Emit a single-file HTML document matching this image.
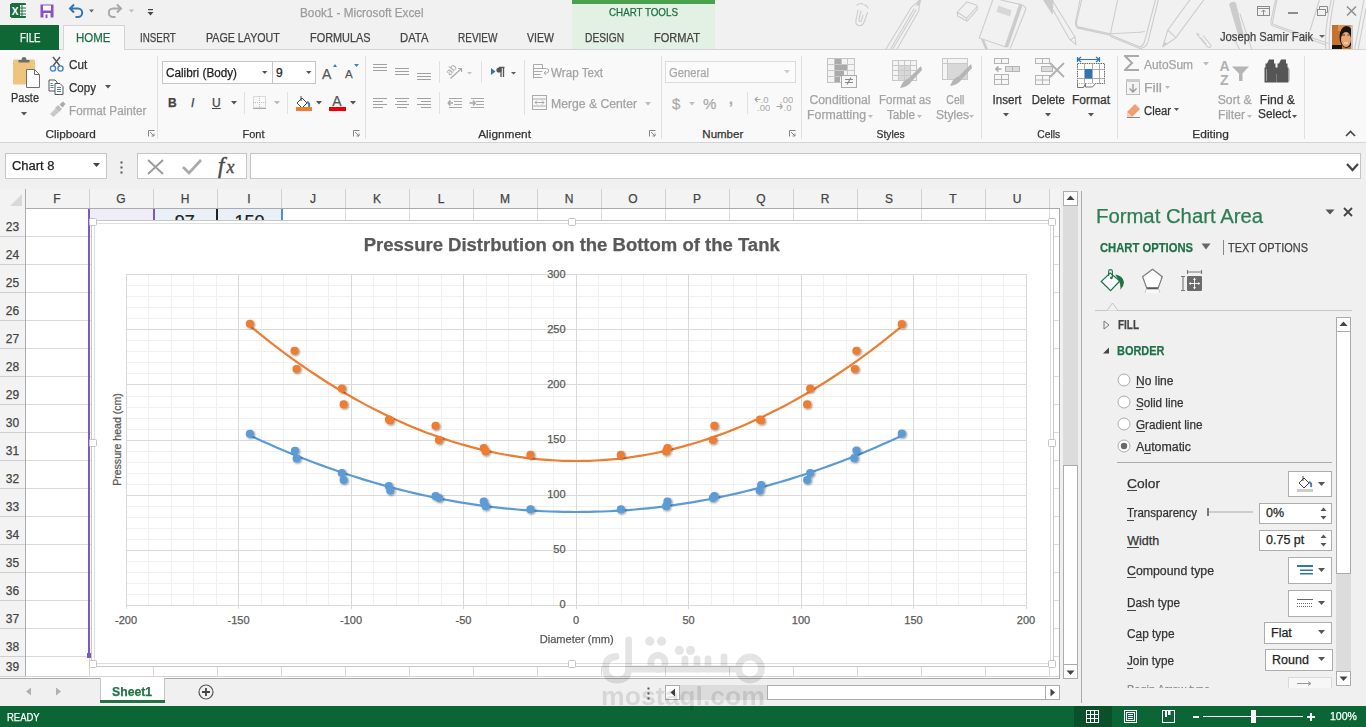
<!DOCTYPE html>
<html><head><meta charset="utf-8"><style>
html,body{margin:0;padding:0;width:1366px;height:727px;overflow:hidden;background:#f0f0f0}
body{position:relative;font-family:"Liberation Sans",sans-serif}
body>div{position:absolute;white-space:nowrap;-webkit-text-stroke:0.25px currentColor}
</style></head><body>
<div style="left:0px;top:0px;width:1366px;height:50px;background:#f1f1f1"></div>
<div style="left:0px;top:50px;width:1366px;height:93px;background:#f9f9f9"></div>
<div style="left:0px;top:142px;width:1366px;height:1px;background:#d4d4d4"></div>
<div style="left:0px;top:143px;width:1366px;height:563px;background:#f0f0f0"></div>
<div style="left:0px;top:49px;width:1366px;height:1px;background:#d4d4d4"></div>
<svg style="position:absolute;left:10px;top:2px;" width="17" height="17" viewBox="0 0 17 17"><rect x="1" y="1" width="15" height="15" rx="1" fill="#1d6f42"/><rect x="8" y="3" width="8" height="11" fill="#fff"/><g stroke="#1d6f42" stroke-width="1"><line x1="8" y1="6" x2="16" y2="6"/><line x1="8" y1="9" x2="16" y2="9"/><line x1="8" y1="12" x2="16" y2="12"/><line x1="12" y1="3" x2="12" y2="14"/></g><rect x="0" y="2" width="10" height="13" fill="#1d6f42"/><text x="5" y="12.5" font-size="10" font-weight="bold" fill="#fff" text-anchor="middle" font-family="Liberation Sans">X</text></svg>
<svg style="position:absolute;left:40px;top:4px;" width="15" height="15" viewBox="0 0 15 15"><rect x="0.5" y="0.5" width="13" height="13" fill="#8a4fc2" /><rect x="3" y="1.5" width="8" height="5" fill="#fff"/><rect x="3.5" y="9" width="7" height="5" fill="#fff"/><rect x="5.5" y="10.5" width="2" height="3.5" fill="#8a4fc2"/></svg>
<svg style="position:absolute;left:68px;top:2px;" width="28" height="17" viewBox="0 0 28 17"><path d="M6 2.5 L2 6.5 L6 10.5 M2 6.5 H10 a4.2 4.2 0 0 1 0 8.4 H7.5" fill="none" stroke="#2f75b5" stroke-width="2"/><path d="M21 7.5 h5 l-2.5 3z" fill="#666"/></svg>
<svg style="position:absolute;left:108px;top:2px;" width="28" height="17" viewBox="0 0 28 17"><path d="M9 2.5 L13 6.5 L9 10.5 M13 6.5 H5 a4.2 4.2 0 0 0 0 8.4 H7.5" fill="none" stroke="#a8a8a8" stroke-width="2"/><path d="M21 7.5 h5 l-2.5 3z" fill="#bbb"/></svg>
<svg style="position:absolute;left:146px;top:8px;" width="10" height="10" viewBox="0 0 10 10"><rect x="2" y="1" width="5" height="1.2" fill="#444"/><path d="M1.5 4 h6 l-3 3.5z" fill="#444"/></svg>
<div style="left:300.00px;top:6.84px;font-size:12px;line-height:12px;color:#9c9c9c;transform:scaleX(0.9799);transform-origin:left center;">Book1 - Microsoft Excel</div>
<div style="left:572px;top:0px;width:143px;height:49px;background:#e3f1e4"></div>
<div style="left:572px;top:0px;width:143px;height:4px;background:#4aa14f"></div>
<div style="left:602.52px;top:7.27px;font-size:11.5px;line-height:11.5px;color:#1a6e3f;transform:scaleX(0.8524);transform-origin:center center;">CHART TOOLS</div>
<svg style="position:absolute;left:0;top:0" width="1366" height="49">
<g fill="none" stroke="#cdcdcd" stroke-width="1.1" stroke-linecap="round" stroke-linejoin="round">
<path d="M858 10 L856 20 Q855 25 859 25.5 Q863 26 864.5 21 L867.5 12.5 M861 11 L859 19 Q858.5 22 861 21.5 L863 15"/>
<path d="M857 5 Q860 2.5 863 4 M864 5 Q867 5 868 8"/>
<path d="M886 49 L911.4 7.3 M890.5 49 L914 9 M892.7 49 L916.1 10 M897.1 49 L918.7 11 M911.4 7.3 L920 0 M918.7 11 L920 0"/>
<path d="M967 1.8 L977 5.5 L977.3 9.5 L967.1 21.2 L957.6 16.1 L957.2 12.1 Z M957.5 12.3 L966.5 18.3 L977.2 6.5 M966.5 18.3 V21"/>
<path d="M992.7 0 L979.2 38.1 L1005.9 46.9 M1010.3 48.3 L1025.7 9.5 Q1026 6 1020.5 4.4 L1000.8 0"/>
<path d="M1049.5 3.7 L1069.3 38.8 L1075.9 44.7 L1075.1 37.3 L1053.5 2.2 M1070.4 39.9 L1074.4 37.3"/>
<path d="M1081.7 0 L1076.6 22 Q1076 27 1079.5 27.1 L1110.3 33.7 L1140 32.2 M1080 0 L1075.5 22 Q1075 28.5 1080 28.6 L1110.3 35.1 M1117.6 0 L1110.3 34.4 M1110.6 35.1 L1140 46.9 M1110.6 36.5 L1140 48.5"/>
<path d="M1155.4 0 L1145 40 Q1143.5 46 1140 46.9 M1158.3 0 L1148 41.7 Q1146 47 1141 48.5 M1140 32.2 L1144.4 31.5"/>
<path d="M1189.8 0 L1167.8 30 L1162.7 46.9 L1175.9 37.7 L1203.7 0 M1167.8 30 L1175.9 37.7"/>
<path d="M1199 35 Q1195.5 32 1198 35.5 L1207 46.5 Q1210.5 49 1211 45.5 L1203.5 36 M1201 38 L1206 44"/>
<path d="M1240 13.8 L1252 50 M1232 35 L1240 50"/>
<path d="M1276.9 0 L1272.7 21.2 Q1272 25 1275 24.9 L1328.6 43.4 M1275.5 0 L1271 21 Q1270.5 27 1276 27 L1326 45"/>
<path d="M1319.3 0 L1310.1 30.4 M1331.3 0 Q1324 30 1325.8 50 M1334 0 Q1328 30 1329.5 50 M1364 0 L1354.4 50 M1366 8 L1358 50"/>
</g>
<g fill="#cccccc">
<path d="M918.5 0 L921 0 L920 5 L916 6z"/>
<path d="M998.2 5.5 L1011.4 10.2 L1010.3 16.5 L996.7 12.1z" opacity="0.7"/>
<path d="M1019 4.5 L1022.5 5.5 L1008 47.5 L1004.5 46.5z"/>
<path d="M981 39 L984 39.5 L988 49 L985 49z"/>
<path d="M1042.9 0 L1053.5 0 L1052.8 14.6 L1051.7 13.5z"/>
<path d="M1164 42 L1162.7 46.9 L1168 43.5z"/>
<path d="M1229 4 Q1233 0 1236 3 L1244 36 L1239 38z"/>
</g>
</svg>
<svg style="position:absolute;left:1256px;top:5px;" width="16" height="12" viewBox="0 0 16 12"><rect x="1.5" y="1.5" width="12" height="9" fill="none" stroke="#8c8c8c"/><line x1="1.5" y1="3.5" x2="13.5" y2="3.5" stroke="#8c8c8c"/><path d="M7.5 10 v-5 M5.5 7 l2 -2 l2 2" stroke="#8c8c8c" fill="none"/></svg>
<div style="left:1288px;top:12px;width:10px;height:1.6px;background:#8c8c8c"></div>
<svg style="position:absolute;left:1316px;top:5px;" width="14" height="12" viewBox="0 0 14 12"><rect x="1.5" y="4.5" width="8" height="6" fill="none" stroke="#8c8c8c"/><path d="M3.5 4.5 v-3 h8 v6 h-2" fill="none" stroke="#8c8c8c"/></svg>
<svg style="position:absolute;left:1345px;top:5px;" width="14" height="12" viewBox="0 0 14 12"><path d="M2 1.5 L11 10.5 M11 1.5 L2 10.5" stroke="#8c8c8c" stroke-width="1.5"/></svg>
<div style="left:1220.00px;top:30.84px;font-size:12px;line-height:12px;color:#444;transform:scaleX(0.9360);transform-origin:left center;">Joseph Samir Faik</div>
<svg style="position:absolute;left:1319px;top:35px;" width="8" height="5" viewBox="0 0 8 5"><path d="M0 0 h6 l-3 3z" fill="#666"/></svg>
<svg style="position:absolute;left:1332px;top:25px;" width="21" height="24" viewBox="0 0 21 24"><rect width="21" height="24" fill="#c6722f"/><rect x="6" y="0" width="15" height="6" fill="#e09050"/><ellipse cx="14.5" cy="12" rx="7" ry="11" fill="#1a1414"/><ellipse cx="14" cy="14.5" rx="5" ry="7.5" fill="#e6a571"/><path d="M10 10 h3 M15.5 10 h3" stroke="#553322" stroke-width="1"/><path d="M12 18 h4" stroke="#f0e0d0" stroke-width="1.2"/><rect x="0" y="20" width="10" height="4" fill="#151515"/><rect x="19" y="0" width="2" height="24" fill="#c8c8c8"/></svg>
<div style="left:0px;top:25px;width:59px;height:25px;background:#0e6735"></div>
<div style="left:19.50px;top:31.84px;font-size:12px;line-height:12px;color:#fff;transform:scaleX(0.8090);transform-origin:left center;">FILE</div>
<div style="left:63px;top:25px;width:62px;height:25px;background:#f9f9f9;border:1px solid #d4d4d4;border-bottom:none;box-sizing:border-box"></div>
<div style="left:64px;top:49px;width:60px;height:1px;background:#f9f9f9"></div>
<div style="left:76.40px;top:31.84px;font-size:12px;line-height:12px;color:#1e7145;transform:scaleX(0.9556);transform-origin:left center;">HOME</div>
<div style="left:140.30px;top:31.84px;font-size:12px;line-height:12px;color:#444;transform:scaleX(0.8176);transform-origin:left center;">INSERT</div>
<div style="left:206.40px;top:31.84px;font-size:12px;line-height:12px;color:#444;transform:scaleX(0.8901);transform-origin:left center;">PAGE LAYOUT</div>
<div style="left:310.40px;top:31.84px;font-size:12px;line-height:12px;color:#444;transform:scaleX(0.9089);transform-origin:left center;">FORMULAS</div>
<div style="left:400.00px;top:31.84px;font-size:12px;line-height:12px;color:#444;transform:scaleX(0.9397);transform-origin:left center;">DATA</div>
<div style="left:458.00px;top:31.84px;font-size:12px;line-height:12px;color:#444;transform:scaleX(0.8344);transform-origin:left center;">REVIEW</div>
<div style="left:526.80px;top:31.84px;font-size:12px;line-height:12px;color:#444;transform:scaleX(0.8771);transform-origin:left center;">VIEW</div>
<div style="left:585.40px;top:31.84px;font-size:12px;line-height:12px;color:#444;transform:scaleX(0.8520);transform-origin:left center;">DESIGN</div>
<div style="left:654.20px;top:31.84px;font-size:12px;line-height:12px;color:#444;transform:scaleX(0.9223);transform-origin:left center;">FORMAT</div>
<div style="left:157px;top:56px;width:1px;height:83px;background:#e1e1e1"></div>
<div style="left:365px;top:56px;width:1px;height:83px;background:#e1e1e1"></div>
<div style="left:661px;top:56px;width:1px;height:83px;background:#e1e1e1"></div>
<div style="left:801px;top:56px;width:1px;height:83px;background:#e1e1e1"></div>
<div style="left:981px;top:56px;width:1px;height:83px;background:#e1e1e1"></div>
<div style="left:1117px;top:56px;width:1px;height:83px;background:#e1e1e1"></div>
<div style="left:1304px;top:56px;width:1px;height:83px;background:#e1e1e1"></div>
<div style="left:45.99px;top:128.77px;font-size:11.5px;line-height:11.5px;color:#333;transform:scaleX(1.0240);transform-origin:center center;">Clipboard</div>
<div style="left:241.50px;top:128.77px;font-size:11.5px;line-height:11.5px;color:#333;transform:scaleX(0.9561);transform-origin:center center;">Font</div>
<div style="left:478.93px;top:128.77px;font-size:11.5px;line-height:11.5px;color:#333;transform:scaleX(1.0306);transform-origin:center center;">Alignment</div>
<div style="left:702.35px;top:128.77px;font-size:11.5px;line-height:11.5px;color:#333;">Number</div>
<div style="left:875.04px;top:128.77px;font-size:11.5px;line-height:11.5px;color:#333;transform:scaleX(0.8973);transform-origin:center center;">Styles</div>
<div style="left:1035.72px;top:128.77px;font-size:11.5px;line-height:11.5px;color:#333;transform:scaleX(0.8998);transform-origin:center center;">Cells</div>
<div style="left:1193.22px;top:128.77px;font-size:11.5px;line-height:11.5px;color:#333;transform:scaleX(1.0381);transform-origin:center center;">Editing</div>
<svg style="position:absolute;left:148px;top:130px;" width="7" height="7" viewBox="0 0 7 7"><path d="M0.5 0.5 h6 M0.5 0.5 v6" stroke="#888" fill="none"/><path d="M2 2 L6 6 M6 3.5 v2.5 h-2.5" stroke="#888" fill="none"/></svg>
<svg style="position:absolute;left:353px;top:130px;" width="7" height="7" viewBox="0 0 7 7"><path d="M0.5 0.5 h6 M0.5 0.5 v6" stroke="#888" fill="none"/><path d="M2 2 L6 6 M6 3.5 v2.5 h-2.5" stroke="#888" fill="none"/></svg>
<svg style="position:absolute;left:649px;top:130px;" width="7" height="7" viewBox="0 0 7 7"><path d="M0.5 0.5 h6 M0.5 0.5 v6" stroke="#888" fill="none"/><path d="M2 2 L6 6 M6 3.5 v2.5 h-2.5" stroke="#888" fill="none"/></svg>
<svg style="position:absolute;left:789px;top:130px;" width="7" height="7" viewBox="0 0 7 7"><path d="M0.5 0.5 h6 M0.5 0.5 v6" stroke="#888" fill="none"/><path d="M2 2 L6 6 M6 3.5 v2.5 h-2.5" stroke="#888" fill="none"/></svg>
<svg style="position:absolute;left:1345px;top:130px;" width="11" height="7" viewBox="0 0 11 7"><path d="M1 6 L5.5 1.5 L10 6" stroke="#444" stroke-width="1.6" fill="none"/></svg>
<svg style="position:absolute;left:12px;top:56px;" width="30" height="33" viewBox="0 0 30 33"><rect x="1" y="3.5" width="22" height="25" rx="1.5" fill="#efc47e"/><path d="M6.5 6.5 v-2.5 h3 q0 -3 2.5 -3 q2.5 0 2.5 3 h3 v2.5z" fill="#6e6e6e"/><path d="M14.5 13.5 h8 l5 5 v13 h-13z" fill="#fff" stroke="#6e6e6e" stroke-width="1"/><path d="M22.5 13.5 v5 h5" fill="none" stroke="#6e6e6e"/></svg>
<div style="left:11.30px;top:92.14px;font-size:12px;line-height:12px;color:#333;transform:scaleX(0.9125);transform-origin:left center;">Paste</div>
<svg style="position:absolute;left:21px;top:112px;" width="7" height="5" viewBox="0 0 7 5"><path d="M0 0 h6 l-3 3.5z" fill="#555"/></svg>
<svg style="position:absolute;left:49px;top:56px;" width="16" height="16" viewBox="0 0 16 16"><path d="M4 1 L11 10 M11 1 L4 10" stroke="#555" stroke-width="1.4"/><circle cx="4" cy="12.5" r="2.6" fill="none" stroke="#3f7fc4" stroke-width="1.3"/><circle cx="11.5" cy="12.5" r="2.6" fill="none" stroke="#3f7fc4" stroke-width="1.3"/></svg>
<div style="left:68.50px;top:58.54px;font-size:12px;line-height:12px;color:#333;transform:scaleX(0.9747);transform-origin:left center;">Cut</div>
<svg style="position:absolute;left:48px;top:79px;" width="17" height="16" viewBox="0 0 17 16"><path d="M1 1 h6 l2 2 v9 h-8z" fill="#fff" stroke="#555"/><path d="M7 4.5 h5 l3 3 v8 h-8z" fill="#fff" stroke="#555"/><path d="M2.5 4.5 h2 M2.5 6.5 h3 M2.5 8.5 h3 M9 8.5 h4 M9 10.5 h4 M9 12.5 h4" stroke="#3f7fc4"/></svg>
<div style="left:68.50px;top:82.34px;font-size:12px;line-height:12px;color:#333;transform:scaleX(0.9639);transform-origin:left center;">Copy</div>
<svg style="position:absolute;left:105px;top:85px;" width="7" height="5" viewBox="0 0 7 5"><path d="M0 0 h6 l-3 3.5z" fill="#555"/></svg>
<svg style="position:absolute;left:49px;top:101px;" width="17" height="16" viewBox="0 0 17 16"><path d="M1 13 L6.5 7.5 L10 11 L4.5 16z" fill="#c9c9c9"/><path d="M6 7 l3 -3 l4 4 l-3 3z" fill="#bdbdbd"/><path d="M10.5 3.5 l3.5 -3 l2.5 2.5 l-3 3.5z" fill="#aaaaaa"/></svg>
<div style="left:68.50px;top:105.34px;font-size:12px;line-height:12px;color:#a3a3a3;transform:scaleX(0.9766);transform-origin:left center;">Format Painter</div>
<div style="left:162px;top:61px;width:111px;height:23px;background:#fff;border:1px solid #c6c6c6;box-sizing:border-box"></div>
<div style="left:272px;top:61px;width:44px;height:23px;background:#fff;border:1px solid #c6c6c6;box-sizing:border-box"></div>
<div style="left:165.50px;top:67.34px;font-size:12px;line-height:12px;color:#222;transform:scaleX(0.9769);transform-origin:left center;">Calibri (Body)</div>
<svg style="position:absolute;left:262px;top:71px;" width="6" height="4" viewBox="0 0 6 4"><path d="M0 0 h5.5 l-2.75 3z" fill="#555"/></svg>
<div style="left:276.00px;top:67.34px;font-size:12px;line-height:12px;color:#222;">9</div>
<svg style="position:absolute;left:306px;top:71px;" width="6" height="4" viewBox="0 0 6 4"><path d="M0 0 h5.5 l-2.75 3z" fill="#555"/></svg>
<div style="left:322.00px;top:67.15px;font-size:14px;line-height:14px;color:#555;">A</div>
<svg style="position:absolute;left:333px;top:64px;" width="5" height="4" viewBox="0 0 5 4"><path d="M0 3 h4 l-2 -3z" fill="#3f7fc4"/></svg>
<div style="left:345.00px;top:69.27px;font-size:11.5px;line-height:11.5px;color:#555;">A</div>
<svg style="position:absolute;left:354px;top:64px;" width="6" height="4" viewBox="0 0 6 4"><path d="M0 0 h5 l-2.5 3z" fill="#3f7fc4"/></svg>
<div style="left:168.00px;top:96.84px;font-size:12px;line-height:12px;color:#444;font-weight:bold;">B</div>
<div style="left:191.00px;top:96.84px;font-size:12px;line-height:12px;color:#444;font-style:italic;">I</div>
<div style="left:212.00px;top:96.84px;font-size:12px;line-height:12px;color:#444;text-decoration:underline;">U</div>
<svg style="position:absolute;left:231px;top:101px;" width="7" height="5" viewBox="0 0 7 5"><path d="M0 0 h6 l-3 3.5z" fill="#555"/></svg>
<div style="left:244px;top:92px;width:1px;height:22px;background:#e1e1e1"></div>
<svg style="position:absolute;left:253px;top:96px;" width="14" height="13" viewBox="0 0 14 13"><g stroke="#bbb" stroke-dasharray="1 1"><rect x="0.5" y="0.5" width="12" height="11" fill="none"/><line x1="6.5" y1="0" x2="6.5" y2="12"/><line x1="0" y1="6.5" x2="13" y2="6.5"/></g><line x1="0" y1="12.5" x2="13" y2="12.5" stroke="#aaa"/></svg>
<svg style="position:absolute;left:274px;top:101px;" width="7" height="5" viewBox="0 0 7 5"><path d="M0 0 h6 l-3 3.5z" fill="#bbb"/></svg>
<div style="left:287px;top:92px;width:1px;height:22px;background:#e1e1e1"></div>
<svg style="position:absolute;left:295px;top:95px;" width="17" height="17" viewBox="0 0 17 17"><path d="M2 8 L7 3 L12 8 L7 13z" fill="#fff" stroke="#444"/><path d="M6 1 v5" stroke="#444"/><path d="M12 7 q3 1 2 5" stroke="#3f7fc4" stroke-width="2" fill="none"/><rect x="1" y="12" width="16" height="4" fill="#ed7d31"/></svg>
<svg style="position:absolute;left:316px;top:101px;" width="7" height="5" viewBox="0 0 7 5"><path d="M0 0 h6 l-3 3.5z" fill="#555"/></svg>
<div style="left:332.33px;top:94.15px;font-size:14px;line-height:14px;color:#555;">A</div>
<div style="left:329px;top:107px;width:17px;height:4px;background:#e00"></div>
<svg style="position:absolute;left:350px;top:101px;" width="7" height="5" viewBox="0 0 7 5"><path d="M0 0 h6 l-3 3.5z" fill="#555"/></svg>
<svg style="position:absolute;left:373px;top:64px;" width="16" height="14" viewBox="0 0 16 14"><rect x="0" y="0" width="14" height="1" fill="#a0a0a0"/><rect x="0" y="3" width="14" height="1" fill="#a0a0a0"/><rect x="0" y="6" width="14" height="1" fill="#a0a0a0"/></svg>
<svg style="position:absolute;left:395px;top:68px;" width="16" height="14" viewBox="0 0 16 14"><rect x="0" y="0" width="14" height="1" fill="#a0a0a0"/><rect x="0" y="3" width="14" height="1" fill="#a0a0a0"/><rect x="0" y="6" width="14" height="1" fill="#a0a0a0"/></svg>
<svg style="position:absolute;left:417px;top:73px;" width="16" height="14" viewBox="0 0 16 14"><rect x="0" y="0" width="14" height="1" fill="#a0a0a0"/><rect x="0" y="3" width="14" height="1" fill="#a0a0a0"/><rect x="0" y="6" width="14" height="1" fill="#a0a0a0"/></svg>
<svg style="position:absolute;left:373px;top:98px;" width="16" height="14" viewBox="0 0 16 14"><rect x="0" y="0" width="14" height="1" fill="#a0a0a0"/><rect x="0" y="3" width="10" height="1" fill="#a0a0a0"/><rect x="0" y="6" width="14" height="1" fill="#a0a0a0"/><rect x="0" y="9" width="10" height="1" fill="#a0a0a0"/></svg>
<svg style="position:absolute;left:395px;top:98px;" width="16" height="14" viewBox="0 0 16 14"><rect x="0" y="0" width="14" height="1" fill="#a0a0a0"/><rect x="2" y="3" width="10" height="1" fill="#a0a0a0"/><rect x="0" y="6" width="14" height="1" fill="#a0a0a0"/><rect x="2" y="9" width="10" height="1" fill="#a0a0a0"/></svg>
<svg style="position:absolute;left:417px;top:98px;" width="16" height="14" viewBox="0 0 16 14"><rect x="0" y="0" width="14" height="1" fill="#a0a0a0"/><rect x="4" y="3" width="10" height="1" fill="#a0a0a0"/><rect x="0" y="6" width="14" height="1" fill="#a0a0a0"/><rect x="4" y="9" width="10" height="1" fill="#a0a0a0"/></svg>
<div style="left:439px;top:61px;width:1px;height:22px;background:#e1e1e1"></div>
<div style="left:439px;top:92px;width:1px;height:22px;background:#e1e1e1"></div>
<div style="left:481px;top:61px;width:1px;height:22px;background:#e1e1e1"></div>
<div style="left:524px;top:60px;width:1px;height:55px;background:#e1e1e1"></div>
<svg style="position:absolute;left:446px;top:63px;" width="28" height="17" viewBox="0 0 28 17"><text x="0" y="0" font-size="10" fill="#a8a8a8" font-family="Liberation Sans" transform="translate(4 13) rotate(-50)">ab</text><path d="M4.5 15.5 L15.5 5.5 M12 5.5 h3.5 v3.5" stroke="#a8a8a8" fill="none" stroke-width="1.1"/><path d="M21 9 h5 l-2.5 2.5z" fill="#c0c0c0"/></svg>
<svg style="position:absolute;left:447px;top:97px;" width="17" height="12" viewBox="0 0 17 12"><path d="M2 1.5 h13 M7 4.5 h8 M7 7.5 h8 M2 10.5 h13" stroke="#a8a8a8"/><path d="M1 6 h5 M1 6 l2.5 -2.5 M1 6 l2.5 2.5" stroke="#a8a8a8" stroke-width="1.6" fill="none"/></svg>
<svg style="position:absolute;left:469px;top:97px;" width="17" height="12" viewBox="0 0 17 12"><path d="M2 1.5 h13 M7 4.5 h8 M7 7.5 h8 M2 10.5 h13" stroke="#a8a8a8"/><path d="M0.5 6 h6 M6.5 6 l-2.5 -2.5 M6.5 6 l-2.5 2.5" stroke="#a8a8a8" stroke-width="1.6" fill="none"/></svg>
<svg style="position:absolute;left:490px;top:66px;" width="28" height="12" viewBox="0 0 28 12"><path d="M1 2 l4.5 3.5 l-4.5 3.5z" fill="#2f75b5"/><path d="M9 1.5 h5.5 M11 1.5 v9.5 M13.5 1.5 v9.5" stroke="#555" stroke-width="1.3" fill="none"/><circle cx="9" cy="4" r="2.6" fill="#555"/><path d="M21 6 h5 l-2.5 2.5z" fill="#555"/></svg>
<svg style="position:absolute;left:532px;top:63px;" width="17" height="17" viewBox="0 0 17 17"><path d="M1.5 1.5 h9 v4 h-9z M1.5 8.5 h9 M1.5 11.5 h7 M1.5 14.5 h9 M1.5 1.5 v14" stroke="#aaa" fill="none"/><path d="M10 5.5 h4 M12 10 h2.5 a2 2 0 0 0 0 -4.5 M12 10 l2 -2 M12 10 l2 2" stroke="#aaa" fill="none"/></svg>
<div style="left:551.00px;top:66.84px;font-size:12px;line-height:12px;color:#a3a3a3;transform:scaleX(0.9706);transform-origin:left center;">Wrap Text</div>
<svg style="position:absolute;left:532px;top:95px;" width="16" height="16" viewBox="0 0 16 16"><rect x="0.5" y="0.5" width="14" height="14" fill="none" stroke="#aaa"/><path d="M0.5 4 h14 M0.5 11 h14 M3 7.5 h9 M3 7.5 l2 -2 M3 7.5 l2 2 M12 7.5 l-2 -2 M12 7.5 l-2 2" stroke="#aaa" fill="none"/></svg>
<div style="left:551.00px;top:97.84px;font-size:12px;line-height:12px;color:#a3a3a3;transform:scaleX(1.0154);transform-origin:left center;">Merge &amp; Center</div>
<svg style="position:absolute;left:645px;top:102px;" width="7" height="5" viewBox="0 0 7 5"><path d="M0 0 h6 l-3 3.5z" fill="#bbb"/></svg>
<div style="left:665px;top:61px;width:131px;height:22px;background:#fbfbfb;border:1px solid #dcdcdc;box-sizing:border-box"></div>
<div style="left:668.50px;top:66.84px;font-size:12px;line-height:12px;color:#a8a8a8;transform:scaleX(0.9370);transform-origin:left center;">General</div>
<svg style="position:absolute;left:784px;top:70px;" width="7" height="5" viewBox="0 0 7 5"><path d="M0 0 h6 l-3 3.5z" fill="#ccc"/></svg>
<div style="left:672.00px;top:96.30px;font-size:15px;line-height:15px;color:#aaa;">$</div>
<svg style="position:absolute;left:689px;top:102px;" width="7" height="5" viewBox="0 0 7 5"><path d="M0 0 h6 l-3 3.5z" fill="#c0c0c0"/></svg>
<div style="left:703.00px;top:96.30px;font-size:15px;line-height:15px;color:#aaa;">%</div>
<div style="left:729.00px;top:92.15px;font-size:14px;line-height:14px;color:#aaa;font-weight:bold;">,</div>
<div style="left:747px;top:92px;width:1px;height:22px;background:#e1e1e1"></div>
<svg style="position:absolute;left:754px;top:95px;" width="16" height="17" viewBox="0 0 16 17"><text x="6.5" y="8" font-size="9.5" fill="#a8a8a8" font-family="Liberation Sans">.0</text><text x="3" y="15.5" font-size="9.5" fill="#a8a8a8" font-family="Liberation Sans">.00</text><path d="M1 4.5 h5.5 M1 4.5 l2.5 -2.5 M1 4.5 l2.5 2.5" stroke="#a8a8a8" fill="none" stroke-width="1.2"/></svg>
<svg style="position:absolute;left:776px;top:95px;" width="17" height="17" viewBox="0 0 17 17"><text x="4" y="8" font-size="9.5" fill="#a8a8a8" font-family="Liberation Sans">.00</text><text x="7.5" y="15.5" font-size="9.5" fill="#a8a8a8" font-family="Liberation Sans">.0</text><path d="M0.5 11.5 h6 M6.5 11.5 l-2.5 -2.5 M6.5 11.5 l-2.5 2.5" stroke="#a8a8a8" fill="none" stroke-width="1.2"/></svg>
<svg style="position:absolute;left:826px;top:57px;" width="33" height="32" viewBox="0 0 33 32"><g stroke="#c3c3c3" fill="#f4f4f4"><rect x="1.5" y="1.5" width="27" height="24"/></g><path d="M1.5 7.5 h27 M1.5 13.5 h27 M1.5 19.5 h27 M8.5 1.5 v24 M15.5 1.5 v24 M21.5 1.5 v24" stroke="#c8c8c8"/><rect x="9" y="2" width="6" height="5" fill="#aaa"/><rect x="9" y="8" width="12" height="5" fill="#aaa"/><rect x="9" y="14" width="9" height="5" fill="#aaa"/><rect x="9" y="20" width="5" height="5" fill="#aaa"/><rect x="15.5" y="18.5" width="15" height="12" fill="#f6f6f6" stroke="#aaa"/><path d="M19 22.5 h8 M19 25.5 h8 M25 20.5 l-4 7" stroke="#888" stroke-width="1.1"/></svg>
<div style="left:810.48px;top:93.84px;font-size:12px;line-height:12px;color:#a3a3a3;transform:scaleX(1.0160);transform-origin:center center;">Conditional</div>
<div style="left:807.00px;top:108.84px;font-size:12px;line-height:12px;color:#a3a3a3;transform:scaleX(1.0288);transform-origin:left center;">Formatting</div>
<svg style="position:absolute;left:868px;top:115px;" width="6" height="4" viewBox="0 0 6 4"><path d="M0 0 h5 l-2.5 3z" fill="#bbb"/></svg>
<svg style="position:absolute;left:891px;top:58px;" width="32" height="32" viewBox="0 0 32 32"><g stroke="#c8c8c8" fill="#f4f4f4"><rect x="1.5" y="2.5" width="24" height="20"/></g><rect x="7" y="8" width="13" height="14" fill="#d8d8d8"/><path d="M1.5 7.5 h24 M1.5 12.5 h24 M1.5 17.5 h24 M7.5 2.5 v20 M13.5 2.5 v20 M19.5 2.5 v20" stroke="#c8c8c8"/><path d="M30 8 L18 20 l3 3 L31 12z" fill="#b5b5b5"/><path d="M18 20 q-6 2 -9 10 q8 -1 12 -7z" fill="#b5b5b5"/></svg>
<div style="left:878.00px;top:93.84px;font-size:12px;line-height:12px;color:#a3a3a3;transform:scaleX(0.9628);transform-origin:center center;">Format as</div>
<div style="left:887.00px;top:108.84px;font-size:12px;line-height:12px;color:#a3a3a3;transform:scaleX(0.9761);transform-origin:left center;">Table</div>
<svg style="position:absolute;left:917px;top:115px;" width="6" height="4" viewBox="0 0 6 4"><path d="M0 0 h5 l-2.5 3z" fill="#bbb"/></svg>
<svg style="position:absolute;left:941px;top:57px;" width="32" height="32" viewBox="0 0 32 32"><g stroke="#c8c8c8" fill="#f4f4f4"><rect x="1.5" y="1.5" width="25" height="21"/></g><rect x="7" y="7" width="19" height="15" fill="#d8d8d8"/><path d="M1.5 6.5 h25 M6.5 1.5 v21" stroke="#c8c8c8"/><path d="M30 7 L18 19 l3 3 L31 11z" fill="#b5b5b5"/><path d="M18 19 q-6 2 -9 10 q8 -1 12 -7z" fill="#b5b5b5"/></svg>
<div style="left:944.66px;top:93.84px;font-size:12px;line-height:12px;color:#a3a3a3;transform:scaleX(0.8707);transform-origin:center center;">Cell</div>
<div style="left:936.00px;top:108.84px;font-size:12px;line-height:12px;color:#a3a3a3;transform:scaleX(1.0099);transform-origin:left center;">Styles</div>
<svg style="position:absolute;left:969px;top:115px;" width="6" height="4" viewBox="0 0 6 4"><path d="M0 0 h5 l-2.5 3z" fill="#bbb"/></svg>
<svg style="position:absolute;left:990px;top:55px;" width="34" height="34" viewBox="0 0 34 34"><g stroke="#b5b5b5" fill="#f6f6f6"><rect x="4.5" y="3.5" width="14" height="5"/><path d="M11.5 3.5 v5"/><rect x="4.5" y="19.5" width="14" height="10"/><path d="M4.5 24.5 h14 M11.5 19.5 v10"/><rect x="15.5" y="11.5" width="14" height="5" fill="#dcdcdc"/><path d="M22.5 11.5 v5"/></g><path d="M5.5 14 h6 M5.5 14 l3 -2.5 M5.5 14 l3 2.5" stroke="#aaa" stroke-width="1.6" fill="none"/></svg>
<div style="left:991.50px;top:93.84px;font-size:12px;line-height:12px;color:#333;transform:scaleX(0.9664);transform-origin:center center;">Insert</div>
<svg style="position:absolute;left:1003px;top:113px;" width="7" height="5" viewBox="0 0 7 5"><path d="M0 0 h6 l-3 3.5z" fill="#555"/></svg>
<svg style="position:absolute;left:1031px;top:55px;" width="36" height="34" viewBox="0 0 36 34"><g stroke="#b5b5b5" fill="#f6f6f6"><rect x="4.5" y="3.5" width="14" height="5"/><path d="M11.5 3.5 v5"/><rect x="4.5" y="20.5" width="14" height="9"/><path d="M4.5 25 h14 M11.5 20.5 v9"/><rect x="10.5" y="11.5" width="11" height="5" fill="#dcdcdc"/></g><path d="M19 8 L33 22 M33 8 L19 22" stroke="#b0b0b0" stroke-width="1.8"/></svg>
<div style="left:1031.16px;top:93.84px;font-size:12px;line-height:12px;color:#333;transform:scaleX(0.9514);transform-origin:center center;">Delete</div>
<svg style="position:absolute;left:1045px;top:113px;" width="7" height="5" viewBox="0 0 7 5"><path d="M0 0 h6 l-3 3.5z" fill="#555"/></svg>
<svg style="position:absolute;left:1075px;top:56px;" width="32" height="34" viewBox="0 0 32 34"><path d="M3 3.5 h21 M3 3.5 l3 -2.5 M3 3.5 l3 2.5 M24 3.5 l-3 -2.5 M24 3.5 l-3 2.5 M2.5 1 v5 M24.5 1 v5" stroke="#2e75b6" stroke-width="1.2" fill="none"/><g stroke="#666" fill="#fff"><rect x="2.5" y="7.5" width="27" height="20" stroke-dasharray="1.5 0.8"/></g><path d="M2.5 13.5 h27 M2.5 22.5 h27 M9.5 7.5 v20 M17.5 7.5 v20 M24.5 7.5 v20" stroke="#aaa"/><rect x="10" y="13" width="7" height="9.5" fill="#2e75b6"/><path d="M2.5 27.5 v4 h6 l2 -4 M10.5 27.5 v3.5 h7 l3 -3.5" stroke="#777" fill="#fff"/></svg>
<div style="left:1072.00px;top:93.84px;font-size:12px;line-height:12px;color:#333;">Format</div>
<svg style="position:absolute;left:1088px;top:113px;" width="7" height="5" viewBox="0 0 7 5"><path d="M0 0 h6 l-3 3.5z" fill="#555"/></svg>
<svg style="position:absolute;left:1124px;top:55px;" width="17" height="16" viewBox="0 0 17 16"><path d="M15 1 h-14 l7 7 l-7 7 h14" stroke="#aaa" stroke-width="2" fill="none"/></svg>
<div style="left:1144.00px;top:58.84px;font-size:12px;line-height:12px;color:#a3a3a3;transform:scaleX(0.9928);transform-origin:left center;">AutoSum</div>
<svg style="position:absolute;left:1203px;top:62px;" width="7" height="5" viewBox="0 0 7 5"><path d="M0 0 h6 l-3 3.5z" fill="#bbb"/></svg>
<svg style="position:absolute;left:1126px;top:79px;" width="14" height="16" viewBox="0 0 14 16"><rect x="0.5" y="0.5" width="13" height="15" fill="#f3f3f3" stroke="#bbb"/><rect x="0" y="0" width="14" height="3" fill="#ccc"/><path d="M7 5 v8 M3.5 9.5 l3.5 3.5 l3.5 -3.5" stroke="#999" fill="none" stroke-width="1.3"/></svg>
<div style="left:1144.00px;top:81.84px;font-size:12px;line-height:12px;color:#a3a3a3;transform:scaleX(1.1743);transform-origin:left center;">Fill</div>
<svg style="position:absolute;left:1165px;top:86px;" width="6" height="4" viewBox="0 0 6 4"><path d="M0 0 h5 l-2.5 3z" fill="#bbb"/></svg>
<svg style="position:absolute;left:1125px;top:103px;" width="16" height="15" viewBox="0 0 16 15"><path d="M2 9 l8 -8 l5 5 l-8 8z" fill="#f0a070"/><path d="M2 9 l5 5 l-2 1 h-3z" fill="#f6d0b8"/><path d="M2 14.5 h13" stroke="#888"/></svg>
<div style="left:1144.00px;top:104.84px;font-size:12px;line-height:12px;color:#333;transform:scaleX(0.9416);transform-origin:left center;">Clear</div>
<svg style="position:absolute;left:1174px;top:108px;" width="6" height="4" viewBox="0 0 6 4"><path d="M0 0 h5 l-2.5 3z" fill="#555"/></svg>
<svg style="position:absolute;left:1219px;top:57px;" width="32" height="30" viewBox="0 0 32 30"><text x="0.5" y="13.5" font-size="14" font-weight="bold" fill="#b0b0b0" font-family="Liberation Sans">A</text><text x="1" y="27.5" font-size="14" font-weight="bold" fill="#b0b0b0" font-family="Liberation Sans">Z</text><path d="M13 9.5 h17 l-6.5 7 v7.5 h-3.5 v-7.5z" fill="#b5b5b5"/></svg>
<div style="left:1217.83px;top:93.84px;font-size:12px;line-height:12px;color:#a3a3a3;transform:scaleX(1.0196);transform-origin:center center;">Sort &amp;</div>
<div style="left:1218.00px;top:108.84px;font-size:12px;line-height:12px;color:#a3a3a3;transform:scaleX(1.0126);transform-origin:left center;">Filter</div>
<svg style="position:absolute;left:1247px;top:115px;" width="6" height="4" viewBox="0 0 6 4"><path d="M0 0 h5 l-2.5 3z" fill="#bbb"/></svg>
<svg style="position:absolute;left:1264px;top:59px;" width="28" height="24" viewBox="0 0 28 24"><path d="M5 0.5 h5 v4 h1.5 v4 h1 v15 h-12 v-15 h1 v-4 h1.5z" fill="#555"/><path d="M17 0.5 h5 v4 h1.5 v4 h1 v15 h-12 v-15 h1 v-4 h1.5z" fill="#555"/><rect x="11" y="9" width="6" height="6" fill="#555"/><path d="M2.5 10 v12 M25 10 v12" stroke="#999"/></svg>
<div style="left:1260.16px;top:93.84px;font-size:12px;line-height:12px;color:#333;transform:scaleX(1.0092);transform-origin:center center;">Find &amp;</div>
<div style="left:1258.00px;top:108.34px;font-size:12px;line-height:12px;color:#333;transform:scaleX(0.9895);transform-origin:left center;">Select</div>
<svg style="position:absolute;left:1292px;top:115px;" width="6" height="4" viewBox="0 0 6 4"><path d="M0 0 h5 l-2.5 3z" fill="#555"/></svg>
<div style="left:5px;top:153px;width:102px;height:26px;background:#fff;border:1px solid #c6c6c6;box-sizing:border-box"></div>
<div style="left:12.00px;top:160.34px;font-size:12px;line-height:12px;color:#222;transform:scaleX(1.0801);transform-origin:left center;">Chart 8</div>
<svg style="position:absolute;left:93px;top:163px;" width="8" height="5" viewBox="0 0 8 5"><path d="M0 0 h7 l-3.5 4z" fill="#444"/></svg>
<svg style="position:absolute;left:120px;top:161px;" width="4" height="15" viewBox="0 0 4 15"><rect x="0.5" y="0.5" width="2" height="2" fill="#555"/><rect x="0.5" y="5.5" width="2" height="2" fill="#555"/><rect x="0.5" y="10.5" width="2" height="2" fill="#555"/></svg>
<div style="left:137px;top:153px;width:110px;height:26px;background:#fff;border:1px solid #c6c6c6;box-sizing:border-box"></div>
<svg style="position:absolute;left:147px;top:159px;" width="17" height="16" viewBox="0 0 17 16"><path d="M1 1 L16 15 M16 1 L1 15" stroke="#999" stroke-width="1.8"/></svg>
<svg style="position:absolute;left:182px;top:159px;" width="20" height="16" viewBox="0 0 20 16"><path d="M1 8 L7 14 L19 1" stroke="#aaa" stroke-width="2.6" fill="none"/></svg>
<svg style="position:absolute;left:214px;top:150px;" width="28" height="30" viewBox="0 0 28 30"><text x="4" y="22.5" font-size="23" font-style="italic" fill="#4a4a4a" font-family="Liberation Serif" stroke="#4a4a4a" stroke-width="0.4">f</text><text x="12.5" y="22.5" font-size="18" font-style="italic" fill="#4a4a4a" font-family="Liberation Serif" stroke="#4a4a4a" stroke-width="0.4">x</text></svg>
<div style="left:250px;top:153px;width:1111px;height:26px;background:#fff;border:1px solid #c6c6c6;box-sizing:border-box"></div>
<svg style="position:absolute;left:1345px;top:162px;" width="16" height="11" viewBox="0 0 16 11"><path d="M2 2 L7.5 8 L13 2" stroke="#444" stroke-width="2.2" fill="none"/></svg>
<div style="left:0px;top:189px;width:1060px;height:20px;background:#f3f3f3"></div>
<div style="left:0px;top:208px;width:1060px;height:1px;background:#ababab"></div>
<div style="left:0px;top:208px;width:25px;height:470px;background:#f3f3f3"></div>
<div style="left:25px;top:189px;width:1px;height:489px;background:#ababab"></div>
<svg style="position:absolute;left:9px;top:193px;" width="14" height="14" viewBox="0 0 14 14"><path d="M13 1 V13 H1z" fill="#d9d9d9"/></svg>
<div style="left:26px;top:209px;width:1033px;height:469px;background:#fff"></div>
<div style="left:53.34px;top:192.84px;font-size:12px;line-height:12px;color:#444;">F</div>
<div style="left:89px;top:189px;width:1px;height:19px;background:#d0d0d0"></div>
<div style="left:89px;top:209px;width:1px;height:469px;background:#dadada"></div>
<div style="left:116.33px;top:192.84px;font-size:12px;line-height:12px;color:#444;">G</div>
<div style="left:153px;top:189px;width:1px;height:19px;background:#d0d0d0"></div>
<div style="left:153px;top:209px;width:1px;height:469px;background:#dadada"></div>
<div style="left:180.67px;top:192.84px;font-size:12px;line-height:12px;color:#444;">H</div>
<div style="left:217px;top:189px;width:1px;height:19px;background:#d0d0d0"></div>
<div style="left:217px;top:209px;width:1px;height:469px;background:#dadada"></div>
<div style="left:247.33px;top:192.84px;font-size:12px;line-height:12px;color:#444;">I</div>
<div style="left:281px;top:189px;width:1px;height:19px;background:#d0d0d0"></div>
<div style="left:281px;top:209px;width:1px;height:469px;background:#dadada"></div>
<div style="left:310.00px;top:192.84px;font-size:12px;line-height:12px;color:#444;">J</div>
<div style="left:345px;top:189px;width:1px;height:19px;background:#d0d0d0"></div>
<div style="left:345px;top:209px;width:1px;height:469px;background:#dadada"></div>
<div style="left:373.00px;top:192.84px;font-size:12px;line-height:12px;color:#444;">K</div>
<div style="left:409px;top:189px;width:1px;height:19px;background:#d0d0d0"></div>
<div style="left:409px;top:209px;width:1px;height:469px;background:#dadada"></div>
<div style="left:437.66px;top:192.84px;font-size:12px;line-height:12px;color:#444;">L</div>
<div style="left:473px;top:189px;width:1px;height:19px;background:#d0d0d0"></div>
<div style="left:473px;top:209px;width:1px;height:469px;background:#dadada"></div>
<div style="left:500.00px;top:192.84px;font-size:12px;line-height:12px;color:#444;">M</div>
<div style="left:537px;top:189px;width:1px;height:19px;background:#d0d0d0"></div>
<div style="left:537px;top:209px;width:1px;height:469px;background:#dadada"></div>
<div style="left:564.67px;top:192.84px;font-size:12px;line-height:12px;color:#444;">N</div>
<div style="left:601px;top:189px;width:1px;height:19px;background:#d0d0d0"></div>
<div style="left:601px;top:209px;width:1px;height:469px;background:#dadada"></div>
<div style="left:628.33px;top:192.84px;font-size:12px;line-height:12px;color:#444;">O</div>
<div style="left:665px;top:189px;width:1px;height:19px;background:#d0d0d0"></div>
<div style="left:665px;top:209px;width:1px;height:469px;background:#dadada"></div>
<div style="left:693.00px;top:192.84px;font-size:12px;line-height:12px;color:#444;">P</div>
<div style="left:729px;top:189px;width:1px;height:19px;background:#d0d0d0"></div>
<div style="left:729px;top:209px;width:1px;height:469px;background:#dadada"></div>
<div style="left:756.33px;top:192.84px;font-size:12px;line-height:12px;color:#444;">Q</div>
<div style="left:793px;top:189px;width:1px;height:19px;background:#d0d0d0"></div>
<div style="left:793px;top:209px;width:1px;height:469px;background:#dadada"></div>
<div style="left:820.67px;top:192.84px;font-size:12px;line-height:12px;color:#444;">R</div>
<div style="left:857px;top:189px;width:1px;height:19px;background:#d0d0d0"></div>
<div style="left:857px;top:209px;width:1px;height:469px;background:#dadada"></div>
<div style="left:885.00px;top:192.84px;font-size:12px;line-height:12px;color:#444;">S</div>
<div style="left:921px;top:189px;width:1px;height:19px;background:#d0d0d0"></div>
<div style="left:921px;top:209px;width:1px;height:469px;background:#dadada"></div>
<div style="left:949.34px;top:192.84px;font-size:12px;line-height:12px;color:#444;">T</div>
<div style="left:985px;top:189px;width:1px;height:19px;background:#d0d0d0"></div>
<div style="left:985px;top:209px;width:1px;height:469px;background:#dadada"></div>
<div style="left:1012.67px;top:192.84px;font-size:12px;line-height:12px;color:#444;">U</div>
<div style="left:1049px;top:189px;width:1px;height:19px;background:#d0d0d0"></div>
<div style="left:1049px;top:209px;width:1px;height:469px;background:#dadada"></div>
<div style="left:5.83px;top:220.84px;font-size:12px;line-height:12px;color:#444;">23</div>
<div style="left:0px;top:236px;width:25px;height:1px;background:#cfcfcf"></div>
<div style="left:26px;top:236px;width:1033px;height:1px;background:#dadada"></div>
<div style="left:5.83px;top:248.84px;font-size:12px;line-height:12px;color:#444;">24</div>
<div style="left:0px;top:264px;width:25px;height:1px;background:#cfcfcf"></div>
<div style="left:26px;top:264px;width:1033px;height:1px;background:#dadada"></div>
<div style="left:5.83px;top:276.84px;font-size:12px;line-height:12px;color:#444;">25</div>
<div style="left:0px;top:292px;width:25px;height:1px;background:#cfcfcf"></div>
<div style="left:26px;top:292px;width:1033px;height:1px;background:#dadada"></div>
<div style="left:5.83px;top:304.84px;font-size:12px;line-height:12px;color:#444;">26</div>
<div style="left:0px;top:320px;width:25px;height:1px;background:#cfcfcf"></div>
<div style="left:26px;top:320px;width:1033px;height:1px;background:#dadada"></div>
<div style="left:5.83px;top:332.84px;font-size:12px;line-height:12px;color:#444;">27</div>
<div style="left:0px;top:348px;width:25px;height:1px;background:#cfcfcf"></div>
<div style="left:26px;top:348px;width:1033px;height:1px;background:#dadada"></div>
<div style="left:5.83px;top:360.84px;font-size:12px;line-height:12px;color:#444;">28</div>
<div style="left:0px;top:376px;width:25px;height:1px;background:#cfcfcf"></div>
<div style="left:26px;top:376px;width:1033px;height:1px;background:#dadada"></div>
<div style="left:5.83px;top:388.84px;font-size:12px;line-height:12px;color:#444;">29</div>
<div style="left:0px;top:404px;width:25px;height:1px;background:#cfcfcf"></div>
<div style="left:26px;top:404px;width:1033px;height:1px;background:#dadada"></div>
<div style="left:5.83px;top:416.84px;font-size:12px;line-height:12px;color:#444;">30</div>
<div style="left:0px;top:432px;width:25px;height:1px;background:#cfcfcf"></div>
<div style="left:26px;top:432px;width:1033px;height:1px;background:#dadada"></div>
<div style="left:5.83px;top:444.84px;font-size:12px;line-height:12px;color:#444;">31</div>
<div style="left:0px;top:460px;width:25px;height:1px;background:#cfcfcf"></div>
<div style="left:26px;top:460px;width:1033px;height:1px;background:#dadada"></div>
<div style="left:5.83px;top:472.84px;font-size:12px;line-height:12px;color:#444;">32</div>
<div style="left:0px;top:488px;width:25px;height:1px;background:#cfcfcf"></div>
<div style="left:26px;top:488px;width:1033px;height:1px;background:#dadada"></div>
<div style="left:5.83px;top:500.84px;font-size:12px;line-height:12px;color:#444;">33</div>
<div style="left:0px;top:516px;width:25px;height:1px;background:#cfcfcf"></div>
<div style="left:26px;top:516px;width:1033px;height:1px;background:#dadada"></div>
<div style="left:5.83px;top:528.84px;font-size:12px;line-height:12px;color:#444;">34</div>
<div style="left:0px;top:544px;width:25px;height:1px;background:#cfcfcf"></div>
<div style="left:26px;top:544px;width:1033px;height:1px;background:#dadada"></div>
<div style="left:5.83px;top:556.84px;font-size:12px;line-height:12px;color:#444;">35</div>
<div style="left:0px;top:572px;width:25px;height:1px;background:#cfcfcf"></div>
<div style="left:26px;top:572px;width:1033px;height:1px;background:#dadada"></div>
<div style="left:5.83px;top:584.84px;font-size:12px;line-height:12px;color:#444;">36</div>
<div style="left:0px;top:600px;width:25px;height:1px;background:#cfcfcf"></div>
<div style="left:26px;top:600px;width:1033px;height:1px;background:#dadada"></div>
<div style="left:5.83px;top:612.84px;font-size:12px;line-height:12px;color:#444;">37</div>
<div style="left:0px;top:628px;width:25px;height:1px;background:#cfcfcf"></div>
<div style="left:26px;top:628px;width:1033px;height:1px;background:#dadada"></div>
<div style="left:5.83px;top:640.84px;font-size:12px;line-height:12px;color:#444;">38</div>
<div style="left:0px;top:656px;width:25px;height:1px;background:#cfcfcf"></div>
<div style="left:26px;top:656px;width:1033px;height:1px;background:#dadada"></div>
<div style="left:5.83px;top:661.34px;font-size:12px;line-height:12px;color:#444;">39</div>
<div style="left:0px;top:684px;width:25px;height:1px;background:#cfcfcf"></div>
<div style="left:26px;top:684px;width:1033px;height:1px;background:#dadada"></div>
<div style="left:1059px;top:208px;width:1px;height:470px;background:#ababab"></div>
<div style="left:0px;top:678px;width:1060px;height:1px;background:#c6c6c6"></div>
<div style="left:90px;top:209px;width:63px;height:12px;background:#efeef8"></div>
<div style="left:154px;top:209px;width:63px;height:12px;background:#eaf0f7"></div>
<div style="left:218px;top:209px;width:63px;height:12px;background:#eaf0f7"></div>
<div style="left:174.69px;top:213.06px;font-size:18px;line-height:18px;color:#222;">97</div>
<div style="left:234.39px;top:213.06px;font-size:18px;line-height:18px;color:#222;">150</div>
<div style="left:153px;top:209px;width:2px;height:12px;background:#7f56c2"></div>
<div style="left:216px;top:209px;width:2px;height:12px;background:#222"></div>
<div style="left:281px;top:209px;width:2px;height:12px;background:#4e8fd6"></div>
<div style="left:88px;top:209px;width:2px;height:448px;background:#7f56c2"></div>
<div style="left:87px;top:653px;width:5px;height:5px;background:#7f56c2"></div>
<div style="left:91px;top:220px;width:963px;height:447px;background:#fff;border:1px solid #c8c8c8;box-sizing:border-box"></div>
<div style="left:94px;top:223px;width:957px;height:441px;background:#fff;border:1px solid #dedede;box-sizing:border-box"></div>
<div style="left:89px;top:218px;width:8px;height:8px;background:#fff;border:1px solid #c4c4c4;border-radius:1.5px;box-sizing:border-box"></div>
<div style="left:568px;top:218px;width:8px;height:8px;background:#fff;border:1px solid #c4c4c4;border-radius:1.5px;box-sizing:border-box"></div>
<div style="left:1048px;top:218px;width:8px;height:8px;background:#fff;border:1px solid #c4c4c4;border-radius:1.5px;box-sizing:border-box"></div>
<div style="left:89px;top:439px;width:8px;height:8px;background:#fff;border:1px solid #c4c4c4;border-radius:1.5px;box-sizing:border-box"></div>
<div style="left:1048px;top:439px;width:8px;height:8px;background:#fff;border:1px solid #c4c4c4;border-radius:1.5px;box-sizing:border-box"></div>
<div style="left:89px;top:660px;width:8px;height:8px;background:#fff;border:1px solid #c4c4c4;border-radius:1.5px;box-sizing:border-box"></div>
<div style="left:568px;top:660px;width:8px;height:8px;background:#fff;border:1px solid #c4c4c4;border-radius:1.5px;box-sizing:border-box"></div>
<div style="left:1048px;top:660px;width:8px;height:8px;background:#fff;border:1px solid #c4c4c4;border-radius:1.5px;box-sizing:border-box"></div>
<svg style="position:absolute;left:0;top:0" width="1366" height="727"><line x1="148.5" y1="274.5" x2="148.5" y2="605.5" stroke="#f0f0f0" stroke-width="1"/><line x1="171.5" y1="274.5" x2="171.5" y2="605.5" stroke="#f0f0f0" stroke-width="1"/><line x1="193.5" y1="274.5" x2="193.5" y2="605.5" stroke="#f0f0f0" stroke-width="1"/><line x1="216.5" y1="274.5" x2="216.5" y2="605.5" stroke="#f0f0f0" stroke-width="1"/><line x1="261.5" y1="274.5" x2="261.5" y2="605.5" stroke="#f0f0f0" stroke-width="1"/><line x1="283.5" y1="274.5" x2="283.5" y2="605.5" stroke="#f0f0f0" stroke-width="1"/><line x1="306.5" y1="274.5" x2="306.5" y2="605.5" stroke="#f0f0f0" stroke-width="1"/><line x1="328.5" y1="274.5" x2="328.5" y2="605.5" stroke="#f0f0f0" stroke-width="1"/><line x1="373.5" y1="274.5" x2="373.5" y2="605.5" stroke="#f0f0f0" stroke-width="1"/><line x1="396.5" y1="274.5" x2="396.5" y2="605.5" stroke="#f0f0f0" stroke-width="1"/><line x1="418.5" y1="274.5" x2="418.5" y2="605.5" stroke="#f0f0f0" stroke-width="1"/><line x1="441.5" y1="274.5" x2="441.5" y2="605.5" stroke="#f0f0f0" stroke-width="1"/><line x1="486.5" y1="274.5" x2="486.5" y2="605.5" stroke="#f0f0f0" stroke-width="1"/><line x1="508.5" y1="274.5" x2="508.5" y2="605.5" stroke="#f0f0f0" stroke-width="1"/><line x1="531.5" y1="274.5" x2="531.5" y2="605.5" stroke="#f0f0f0" stroke-width="1"/><line x1="553.5" y1="274.5" x2="553.5" y2="605.5" stroke="#f0f0f0" stroke-width="1"/><line x1="598.5" y1="274.5" x2="598.5" y2="605.5" stroke="#f0f0f0" stroke-width="1"/><line x1="621.5" y1="274.5" x2="621.5" y2="605.5" stroke="#f0f0f0" stroke-width="1"/><line x1="643.5" y1="274.5" x2="643.5" y2="605.5" stroke="#f0f0f0" stroke-width="1"/><line x1="666.5" y1="274.5" x2="666.5" y2="605.5" stroke="#f0f0f0" stroke-width="1"/><line x1="711.5" y1="274.5" x2="711.5" y2="605.5" stroke="#f0f0f0" stroke-width="1"/><line x1="733.5" y1="274.5" x2="733.5" y2="605.5" stroke="#f0f0f0" stroke-width="1"/><line x1="756.5" y1="274.5" x2="756.5" y2="605.5" stroke="#f0f0f0" stroke-width="1"/><line x1="778.5" y1="274.5" x2="778.5" y2="605.5" stroke="#f0f0f0" stroke-width="1"/><line x1="823.5" y1="274.5" x2="823.5" y2="605.5" stroke="#f0f0f0" stroke-width="1"/><line x1="846.5" y1="274.5" x2="846.5" y2="605.5" stroke="#f0f0f0" stroke-width="1"/><line x1="868.5" y1="274.5" x2="868.5" y2="605.5" stroke="#f0f0f0" stroke-width="1"/><line x1="891.5" y1="274.5" x2="891.5" y2="605.5" stroke="#f0f0f0" stroke-width="1"/><line x1="936.5" y1="274.5" x2="936.5" y2="605.5" stroke="#f0f0f0" stroke-width="1"/><line x1="958.5" y1="274.5" x2="958.5" y2="605.5" stroke="#f0f0f0" stroke-width="1"/><line x1="981.5" y1="274.5" x2="981.5" y2="605.5" stroke="#f0f0f0" stroke-width="1"/><line x1="1003.5" y1="274.5" x2="1003.5" y2="605.5" stroke="#f0f0f0" stroke-width="1"/><line x1="126.5" y1="594.5" x2="1026.5" y2="594.5" stroke="#f0f0f0" stroke-width="1"/><line x1="126.5" y1="583.5" x2="1026.5" y2="583.5" stroke="#f0f0f0" stroke-width="1"/><line x1="126.5" y1="572.5" x2="1026.5" y2="572.5" stroke="#f0f0f0" stroke-width="1"/><line x1="126.5" y1="561.5" x2="1026.5" y2="561.5" stroke="#f0f0f0" stroke-width="1"/><line x1="126.5" y1="539.5" x2="1026.5" y2="539.5" stroke="#f0f0f0" stroke-width="1"/><line x1="126.5" y1="528.5" x2="1026.5" y2="528.5" stroke="#f0f0f0" stroke-width="1"/><line x1="126.5" y1="517.5" x2="1026.5" y2="517.5" stroke="#f0f0f0" stroke-width="1"/><line x1="126.5" y1="506.5" x2="1026.5" y2="506.5" stroke="#f0f0f0" stroke-width="1"/><line x1="126.5" y1="484.5" x2="1026.5" y2="484.5" stroke="#f0f0f0" stroke-width="1"/><line x1="126.5" y1="473.5" x2="1026.5" y2="473.5" stroke="#f0f0f0" stroke-width="1"/><line x1="126.5" y1="462.5" x2="1026.5" y2="462.5" stroke="#f0f0f0" stroke-width="1"/><line x1="126.5" y1="451.5" x2="1026.5" y2="451.5" stroke="#f0f0f0" stroke-width="1"/><line x1="126.5" y1="429.5" x2="1026.5" y2="429.5" stroke="#f0f0f0" stroke-width="1"/><line x1="126.5" y1="418.5" x2="1026.5" y2="418.5" stroke="#f0f0f0" stroke-width="1"/><line x1="126.5" y1="407.5" x2="1026.5" y2="407.5" stroke="#f0f0f0" stroke-width="1"/><line x1="126.5" y1="396.5" x2="1026.5" y2="396.5" stroke="#f0f0f0" stroke-width="1"/><line x1="126.5" y1="373.5" x2="1026.5" y2="373.5" stroke="#f0f0f0" stroke-width="1"/><line x1="126.5" y1="362.5" x2="1026.5" y2="362.5" stroke="#f0f0f0" stroke-width="1"/><line x1="126.5" y1="351.5" x2="1026.5" y2="351.5" stroke="#f0f0f0" stroke-width="1"/><line x1="126.5" y1="340.5" x2="1026.5" y2="340.5" stroke="#f0f0f0" stroke-width="1"/><line x1="126.5" y1="318.5" x2="1026.5" y2="318.5" stroke="#f0f0f0" stroke-width="1"/><line x1="126.5" y1="307.5" x2="1026.5" y2="307.5" stroke="#f0f0f0" stroke-width="1"/><line x1="126.5" y1="296.5" x2="1026.5" y2="296.5" stroke="#f0f0f0" stroke-width="1"/><line x1="126.5" y1="285.5" x2="1026.5" y2="285.5" stroke="#f0f0f0" stroke-width="1"/><line x1="126.5" y1="274.0" x2="126.5" y2="609.0" stroke="#d9d9d9" stroke-width="1"/><line x1="238.5" y1="274.0" x2="238.5" y2="609.0" stroke="#d9d9d9" stroke-width="1"/><line x1="351.5" y1="274.0" x2="351.5" y2="609.0" stroke="#d9d9d9" stroke-width="1"/><line x1="463.5" y1="274.0" x2="463.5" y2="609.0" stroke="#d9d9d9" stroke-width="1"/><line x1="576.5" y1="274.0" x2="576.5" y2="609.0" stroke="#d9d9d9" stroke-width="1"/><line x1="688.5" y1="274.0" x2="688.5" y2="609.0" stroke="#d9d9d9" stroke-width="1"/><line x1="801.5" y1="274.0" x2="801.5" y2="609.0" stroke="#d9d9d9" stroke-width="1"/><line x1="913.5" y1="274.0" x2="913.5" y2="609.0" stroke="#d9d9d9" stroke-width="1"/><line x1="1026.5" y1="274.0" x2="1026.5" y2="609.0" stroke="#d9d9d9" stroke-width="1"/><line x1="126.0" y1="605.5" x2="1027.0" y2="605.5" stroke="#d9d9d9" stroke-width="1"/><line x1="126.0" y1="550.5" x2="1027.0" y2="550.5" stroke="#d9d9d9" stroke-width="1"/><line x1="126.0" y1="495.5" x2="1027.0" y2="495.5" stroke="#d9d9d9" stroke-width="1"/><line x1="126.0" y1="440.5" x2="1027.0" y2="440.5" stroke="#d9d9d9" stroke-width="1"/><line x1="126.0" y1="384.5" x2="1027.0" y2="384.5" stroke="#d9d9d9" stroke-width="1"/><line x1="126.0" y1="329.5" x2="1027.0" y2="329.5" stroke="#d9d9d9" stroke-width="1"/><line x1="126.0" y1="274.5" x2="1027.0" y2="274.5" stroke="#d9d9d9" stroke-width="1"/><polyline points="249.90,325.86 256.42,331.22 262.95,336.46 269.47,341.59 276.00,346.62 282.52,351.54 289.04,356.35 295.57,361.05 302.09,365.65 308.62,370.13 315.14,374.51 321.66,378.78 328.19,382.95 334.71,387.00 341.24,390.95 347.76,394.78 354.28,398.51 360.81,402.13 367.33,405.65 373.86,409.05 380.38,412.35 386.90,415.54 393.43,418.62 399.95,421.59 406.48,424.46 413.00,427.22 419.52,429.86 426.05,432.41 432.57,434.84 439.10,437.16 445.62,439.38 452.14,441.49 458.67,443.49 465.19,445.38 471.72,447.16 478.24,448.84 484.76,450.41 491.29,451.86 497.81,453.22 504.34,454.46 510.86,455.59 517.38,456.62 523.91,457.54 530.43,458.35 536.96,459.05 543.48,459.65 550.00,460.14 556.53,460.51 563.05,460.78 569.58,460.95 576.10,461.00 582.62,460.95 589.15,460.78 595.67,460.51 602.20,460.14 608.72,459.65 615.24,459.05 621.77,458.35 628.29,457.54 634.82,456.62 641.34,455.59 647.86,454.46 654.39,453.22 660.91,451.86 667.44,450.41 673.96,448.84 680.48,447.16 687.01,445.38 693.53,443.49 700.06,441.49 706.58,439.38 713.10,437.16 719.63,434.84 726.15,432.41 732.68,429.86 739.20,427.22 745.72,424.46 752.25,421.59 758.77,418.62 765.30,415.54 771.82,412.35 778.34,409.05 784.87,405.65 791.39,402.13 797.92,398.51 804.44,394.78 810.96,390.95 817.49,387.00 824.01,382.95 830.54,378.78 837.06,374.51 843.58,370.13 850.11,365.65 856.63,361.05 863.16,356.35 869.68,351.54 876.20,346.62 882.73,341.59 889.25,336.46 895.78,331.22 902.30,325.86" fill="none" stroke="#ed7d31" stroke-width="2.2" stroke-linecap="round"/><polyline points="249.90,435.39 256.42,438.42 262.95,441.39 269.47,444.31 276.00,447.16 282.52,449.94 289.04,452.67 295.57,455.34 302.09,457.94 308.62,460.49 315.14,462.97 321.66,465.39 328.19,467.75 334.71,470.05 341.24,472.28 347.76,474.46 354.28,476.57 360.81,478.63 367.33,480.62 373.86,482.55 380.38,484.42 386.90,486.23 393.43,487.97 399.95,489.66 406.48,491.28 413.00,492.85 419.52,494.35 426.05,495.79 432.57,497.17 439.10,498.49 445.62,499.74 452.14,500.94 458.67,502.07 465.19,503.14 471.72,504.15 478.24,505.10 484.76,505.99 491.29,506.82 497.81,507.59 504.34,508.29 510.86,508.94 517.38,509.52 523.91,510.04 530.43,510.50 536.96,510.90 543.48,511.23 550.00,511.51 556.53,511.72 563.05,511.88 569.58,511.97 576.10,512.00 582.62,511.97 589.15,511.88 595.67,511.72 602.20,511.51 608.72,511.23 615.24,510.90 621.77,510.50 628.29,510.04 634.82,509.52 641.34,508.94 647.86,508.29 654.39,507.59 660.91,506.82 667.44,505.99 673.96,505.10 680.48,504.15 687.01,503.14 693.53,502.07 700.06,500.94 706.58,499.74 713.10,498.49 719.63,497.17 726.15,495.79 732.68,494.35 739.20,492.85 745.72,491.28 752.25,489.66 758.77,487.97 765.30,486.23 771.82,484.42 778.34,482.55 784.87,480.62 791.39,478.63 797.92,476.57 804.44,474.46 810.96,472.28 817.49,470.05 824.01,467.75 830.54,465.39 837.06,462.97 843.58,460.49 850.11,457.94 856.63,455.34 863.16,452.67 869.68,449.94 876.20,447.16 882.73,444.31 889.25,441.39 895.78,438.42 902.30,435.39" fill="none" stroke="#5b9bd5" stroke-width="2.2" stroke-linecap="round"/><defs><filter id="sh" x="-50%" y="-50%" width="200%" height="200%"><feGaussianBlur in="SourceAlpha" stdDeviation="1.2"/><feOffset dx="0.8" dy="1.2"/><feComponentTransfer><feFuncA type="linear" slope="0.45"/></feComponentTransfer><feMerge><feMergeNode/><feMergeNode in="SourceGraphic"/></feMerge></filter></defs><g filter="url(#sh)"><circle cx="249.9" cy="323.8" r="4.1" fill="#ed7d31"/><circle cx="294.6" cy="350.8" r="4.1" fill="#ed7d31"/><circle cx="296.6" cy="369.0" r="4.1" fill="#ed7d31"/><circle cx="341.9" cy="388.6" r="4.1" fill="#ed7d31"/><circle cx="343.7" cy="404.4" r="4.1" fill="#ed7d31"/><circle cx="389.0" cy="419.5" r="4.1" fill="#ed7d31"/><circle cx="390.0" cy="420.5" r="4.1" fill="#ed7d31"/><circle cx="435.6" cy="425.8" r="4.1" fill="#ed7d31"/><circle cx="439.0" cy="440.1" r="4.1" fill="#ed7d31"/><circle cx="483.8" cy="448.0" r="4.1" fill="#ed7d31"/><circle cx="485.7" cy="451.4" r="4.1" fill="#ed7d31"/><circle cx="530.5" cy="454.8" r="4.1" fill="#ed7d31"/><circle cx="620.9" cy="454.8" r="4.1" fill="#ed7d31"/><circle cx="667.5" cy="448.0" r="4.1" fill="#ed7d31"/><circle cx="666.2" cy="451.4" r="4.1" fill="#ed7d31"/><circle cx="714.4" cy="425.8" r="4.1" fill="#ed7d31"/><circle cx="712.9" cy="440.1" r="4.1" fill="#ed7d31"/><circle cx="760.0" cy="419.5" r="4.1" fill="#ed7d31"/><circle cx="761.2" cy="420.5" r="4.1" fill="#ed7d31"/><circle cx="810.2" cy="388.6" r="4.1" fill="#ed7d31"/><circle cx="807.2" cy="404.4" r="4.1" fill="#ed7d31"/><circle cx="856.5" cy="350.8" r="4.1" fill="#ed7d31"/><circle cx="854.9" cy="369.0" r="4.1" fill="#ed7d31"/><circle cx="901.8" cy="324.2" r="4.1" fill="#ed7d31"/><circle cx="249.9" cy="433.8" r="4.1" fill="#5b9bd5"/><circle cx="295.0" cy="450.8" r="4.1" fill="#5b9bd5"/><circle cx="296.7" cy="458.5" r="4.1" fill="#5b9bd5"/><circle cx="341.9" cy="473.0" r="4.1" fill="#5b9bd5"/><circle cx="343.7" cy="480.0" r="4.1" fill="#5b9bd5"/><circle cx="388.8" cy="486.0" r="4.1" fill="#5b9bd5"/><circle cx="390.3" cy="490.6" r="4.1" fill="#5b9bd5"/><circle cx="435.6" cy="496.2" r="4.1" fill="#5b9bd5"/><circle cx="439.0" cy="498.0" r="4.1" fill="#5b9bd5"/><circle cx="483.8" cy="501.5" r="4.1" fill="#5b9bd5"/><circle cx="485.7" cy="506.2" r="4.1" fill="#5b9bd5"/><circle cx="530.5" cy="509.4" r="4.1" fill="#5b9bd5"/><circle cx="620.9" cy="509.4" r="4.1" fill="#5b9bd5"/><circle cx="667.5" cy="501.5" r="4.1" fill="#5b9bd5"/><circle cx="666.2" cy="506.2" r="4.1" fill="#5b9bd5"/><circle cx="714.4" cy="496.2" r="4.1" fill="#5b9bd5"/><circle cx="712.9" cy="498.0" r="4.1" fill="#5b9bd5"/><circle cx="761.2" cy="485.1" r="4.1" fill="#5b9bd5"/><circle cx="759.7" cy="490.6" r="4.1" fill="#5b9bd5"/><circle cx="810.2" cy="473.0" r="4.1" fill="#5b9bd5"/><circle cx="807.2" cy="480.0" r="4.1" fill="#5b9bd5"/><circle cx="856.5" cy="450.6" r="4.1" fill="#5b9bd5"/><circle cx="854.3" cy="458.2" r="4.1" fill="#5b9bd5"/><circle cx="901.8" cy="433.7" r="4.1" fill="#5b9bd5"/></g></svg>
<div style="left:559.38px;top:598.79px;font-size:11px;line-height:11px;color:#595959;">0</div>
<div style="left:553.27px;top:543.82px;font-size:11px;line-height:11px;color:#595959;">50</div>
<div style="left:547.15px;top:488.86px;font-size:11px;line-height:11px;color:#595959;">100</div>
<div style="left:547.15px;top:433.89px;font-size:11px;line-height:11px;color:#595959;">150</div>
<div style="left:547.15px;top:378.92px;font-size:11px;line-height:11px;color:#595959;">200</div>
<div style="left:547.15px;top:323.96px;font-size:11px;line-height:11px;color:#595959;">250</div>
<div style="left:547.15px;top:268.99px;font-size:11px;line-height:11px;color:#595959;">300</div>
<div style="left:114.99px;top:614.69px;font-size:11px;line-height:11px;color:#595959;">-200</div>
<div style="left:227.49px;top:614.69px;font-size:11px;line-height:11px;color:#595959;">-150</div>
<div style="left:339.99px;top:614.69px;font-size:11px;line-height:11px;color:#595959;">-100</div>
<div style="left:455.55px;top:614.69px;font-size:11px;line-height:11px;color:#595959;">-50</div>
<div style="left:572.94px;top:614.69px;font-size:11px;line-height:11px;color:#595959;">0</div>
<div style="left:682.38px;top:614.69px;font-size:11px;line-height:11px;color:#595959;">50</div>
<div style="left:791.82px;top:614.69px;font-size:11px;line-height:11px;color:#595959;">100</div>
<div style="left:904.32px;top:614.69px;font-size:11px;line-height:11px;color:#595959;">150</div>
<div style="left:1016.82px;top:614.69px;font-size:11px;line-height:11px;color:#595959;">200</div>
<div style="left:374.79px;top:236.99px;font-size:17.5px;line-height:17.5px;color:#595959;font-weight:bold;transform:scaleX(1.0574);transform-origin:center center;">Pressure Distrbution on the Bottom of the Tank</div>
<div style="left:539.54px;top:633.69px;font-size:11px;line-height:11px;color:#595959;transform:scaleX(1.0065);transform-origin:center center;">Diameter (mm)</div>
<div style="left:68.7px;top:434.0px;font-size:11px;line-height:11px;color:#595959;transform:rotate(-90deg) scaleX(0.959);transform-origin:center center">Pressure head (cm)</div>
<svg style="position:absolute;left:0;top:0;pointer-events:none;z-index:5" width="1366" height="727"><g opacity="0.1"><text x="601" y="705" font-size="26.6" font-weight="bold" font-family="Liberation Sans" fill="#000" textLength="164" lengthAdjust="spacingAndGlyphs">mostaql.com</text><g fill="none" stroke="#000" stroke-width="6.8" stroke-linecap="round" stroke-linejoin="round"><path d="M628.6 640 V669 Q628.6 680 617 680 Q605.6 680 605.6 668 Q605.6 657 616 656.5"/><path d="M628.6 669 H734"/><circle cx="658" cy="662.5" r="7.2"/><path d="M685 669 V659 M697 669 V659 M708 669 V659 M724 669 V657"/><circle cx="750" cy="668.5" r="11.5"/></g><g fill="#000"><circle cx="649.7" cy="641.2" r="4.6"/><circle cx="661.5" cy="641.2" r="4.6"/><circle cx="679.3" cy="650.4" r="4.6"/><circle cx="690.5" cy="650.4" r="4.6"/></g></g></svg>
<div style="left:1063px;top:191px;width:15px;height:488px;background:#dcdcdc"></div>
<div style="left:1063px;top:191px;width:15px;height:15px;background:#fff;border:1px solid #ababab;box-sizing:border-box"></div>
<svg style="position:absolute;left:1066px;top:195px;" width="9" height="6" viewBox="0 0 9 6"><path d="M0.5 5 L4.5 0.5 L8.5 5z" fill="#444"/></svg>
<div style="left:1063px;top:465px;width:15px;height:200px;background:#fff;border:1px solid #ababab;box-sizing:border-box"></div>
<div style="left:1063px;top:664px;width:15px;height:15px;background:#fff;border:1px solid #ababab;box-sizing:border-box"></div>
<svg style="position:absolute;left:1066px;top:670px;" width="9" height="6" viewBox="0 0 9 6"><path d="M0.5 0.5 L4.5 5 L8.5 0.5z" fill="#444"/></svg>
<div style="left:1081px;top:191px;width:1px;height:512px;background:#ababab"></div>
<div style="left:0px;top:678px;width:1081px;height:28px;background:#f0f0f0"></div>
<div style="left:0px;top:676px;width:1059px;height:1px;background:#d4d4d4"></div>
<div style="left:0px;top:677px;width:1059px;height:1px;background:#fff"></div>
<div style="left:0px;top:677px;width:25px;height:1px;background:#f3f3f3"></div>
<div style="left:0px;top:678px;width:1060px;height:1px;background:#ababab"></div>
<div style="left:1063px;top:678px;width:15px;height:1px;background:#ababab"></div>
<svg style="position:absolute;left:25px;top:687px;" width="8" height="9" viewBox="0 0 8 9"><path d="M6 0.5 L1 4.5 L6 8.5z" fill="#b0b0b0"/></svg>
<svg style="position:absolute;left:55px;top:687px;" width="8" height="9" viewBox="0 0 8 9"><path d="M1 0.5 L6 4.5 L1 8.5z" fill="#b0b0b0"/></svg>
<div style="left:100px;top:678px;width:65px;height:25px;background:#fff;border:1px solid #c6c6c6;border-top:none;box-sizing:border-box"></div>
<div style="left:100px;top:700px;width:65px;height:3px;background:#217346"></div>
<div style="left:111.90px;top:684.80px;font-size:13px;line-height:13px;color:#217346;font-weight:bold;transform:scaleX(0.9407);transform-origin:left center;">Sheet1</div>
<svg style="position:absolute;left:198px;top:684px;" width="16" height="16" viewBox="0 0 16 16"><circle cx="8" cy="8" r="7" fill="none" stroke="#555" stroke-width="1.2"/><path d="M8 4 v8 M4 8 h8" stroke="#444" stroke-width="1.8"/></svg>
<svg style="position:absolute;left:647px;top:687px;" width="4" height="14" viewBox="0 0 4 14"><rect x="0.5" y="0.5" width="2" height="2" fill="#555"/><rect x="0.5" y="5.5" width="2" height="2" fill="#555"/><rect x="0.5" y="10.5" width="2" height="2" fill="#555"/></svg>
<div style="left:665px;top:685px;width:395px;height:15px;background:#dcdcdc"></div>
<div style="left:665px;top:685px;width:15px;height:15px;background:#fff;border:1px solid #ababab;box-sizing:border-box"></div>
<svg style="position:absolute;left:670px;top:688px;" width="6" height="9" viewBox="0 0 6 9"><path d="M5 0.5 L0.5 4.5 L5 8.5z" fill="#444"/></svg>
<div style="left:767px;top:685px;width:279px;height:15px;background:#fff;border:1px solid #ababab;box-sizing:border-box"></div>
<div style="left:1045px;top:685px;width:15px;height:15px;background:#fff;border:1px solid #ababab;box-sizing:border-box"></div>
<svg style="position:absolute;left:1050px;top:688px;" width="6" height="9" viewBox="0 0 6 9"><path d="M0.5 0.5 L5 4.5 L0.5 8.5z" fill="#444"/></svg>
<div style="left:1082px;top:191px;width:284px;height:515px;background:#f0f0f0"></div>
<div style="left:1096.00px;top:205.57px;font-size:20px;line-height:20px;color:#2e7d52;transform:scaleX(1.0153);transform-origin:left center;">Format Chart Area</div>
<svg style="position:absolute;left:1325px;top:209px;" width="11" height="7" viewBox="0 0 11 7"><path d="M0.5 0.5 h9 l-4.5 5z" fill="#555"/></svg>
<svg style="position:absolute;left:1343px;top:207px;" width="10" height="10" viewBox="0 0 10 10"><path d="M1 1 L9 9 M9 1 L1 9" stroke="#444" stroke-width="1.8"/></svg>
<div style="left:1100.00px;top:241.20px;font-size:13px;line-height:13px;color:#1e7145;font-weight:bold;transform:scaleX(0.8642);transform-origin:left center;">CHART OPTIONS</div>
<svg style="position:absolute;left:1201px;top:243px;" width="10" height="7" viewBox="0 0 10 7"><path d="M0.5 0.5 h9 l-4.5 6z" fill="#666"/></svg>
<div style="left:1223px;top:240px;width:1px;height:15px;background:#888"></div>
<div style="left:1228.00px;top:241.20px;font-size:13px;line-height:13px;color:#444;transform:scaleX(0.8412);transform-origin:left center;">TEXT OPTIONS</div>
<svg style="position:absolute;left:1099px;top:267px;" width="28" height="26" viewBox="0 0 28 26"><path d="M2.3 14.4 L11.2 6 L20.8 14 L11.6 23.6 Z" fill="#fff" stroke="#217346" stroke-width="1.3"/><path d="M9.6 9 V4.5 a1.9 1.9 0 0 1 3.8 0 V10.6" fill="none" stroke="#217346" stroke-width="1.1"/><circle cx="12.4" cy="10.8" r="1.4" fill="#217346"/><path d="M16.2 7.6 Q24 9 25 15.2 Q25 19 21.3 22.8 Q22 17 19.5 13 Z" fill="#217346"/></svg>
<svg style="position:absolute;left:1141px;top:268px;" width="23" height="26" viewBox="0 0 23 26"><path d="M11.5 1.2 L21.3 8.7 L17.1 20.1 H5.8 L1.6 8.7z" fill="#fff" stroke="#7a7a7a" stroke-width="1.2"/><path d="M5.8 20.3 H17.1" stroke="#555" stroke-width="1.8"/><path d="M5.8 20.5 l-1.6 4 M17.1 20.5 l1.8 4" stroke="#bbb"/><rect x="5" y="22" width="13" height="3" fill="#f8f8f8"/></svg>
<svg style="position:absolute;left:1180px;top:269px;" width="24" height="23" viewBox="0 0 24 23"><path d="M1 7.5 h4 M1 21.5 h4 M3 7.5 v14" stroke="#777" stroke-width="1.1"/><path d="M7.5 1 v4 M21.5 1 v4 M7.5 3 h14" stroke="#777" stroke-width="1.1"/><rect x="7" y="7" width="15" height="15" rx="1.2" fill="#6b6b6b"/><path d="M14.5 9.5 v10 M9.5 14.5 h10" stroke="#fff" stroke-width="0.9"/><path d="M14.5 8.8 l-1.6 2 h3.2z M14.5 20.2 l-1.6 -2 h3.2z M8.8 14.5 l2 -1.6 v3.2z M20.2 14.5 l-2 -1.6 v3.2z" fill="#fff"/></svg>
<div style="left:1095px;top:310px;width:257px;height:1px;background:#c6c6c6"></div>
<svg style="position:absolute;left:1106px;top:301px;" width="14" height="10" viewBox="0 0 14 10"><path d="M1 9.5 L6.5 2 L12 9.5" fill="#f0f0f0" stroke="#c6c6c6"/></svg>
<svg style="position:absolute;left:1103px;top:320px;" width="7" height="10" viewBox="0 0 7 10"><path d="M1 1 L6 5 L1 9z" fill="none" stroke="#777"/></svg>
<div style="left:1117.70px;top:319.32px;font-size:12.5px;line-height:12.5px;color:#444;font-weight:bold;transform:scaleX(0.7961);transform-origin:left center;">FILL</div>
<svg style="position:absolute;left:1102px;top:347px;" width="8" height="7" viewBox="0 0 8 7"><path d="M7 0.5 V6.5 H1z" fill="#444"/></svg>
<div style="left:1117.30px;top:345.22px;font-size:12.5px;line-height:12.5px;color:#1e7145;font-weight:bold;transform:scaleX(0.8769);transform-origin:left center;">BORDER</div>
<svg style="position:absolute;left:1117px;top:373px;" width="14" height="14" viewBox="0 0 14 14"><circle cx="7" cy="7" r="6" fill="#fff" stroke="#adadad"/></svg>
<div style="left:1135.50px;top:374.62px;font-size:12.5px;line-height:12.5px;color:#333;transform:scaleX(0.9638);transform-origin:left center;">No line</div>
<div style="left:1135.5px;top:387px;width:8.70061743888359px;height:1px;background:#444"></div>
<svg style="position:absolute;left:1117px;top:395px;" width="14" height="14" viewBox="0 0 14 14"><circle cx="7" cy="7" r="6" fill="#fff" stroke="#adadad"/></svg>
<div style="left:1135.50px;top:396.62px;font-size:12.5px;line-height:12.5px;color:#333;transform:scaleX(0.9364);transform-origin:left center;">Solid line</div>
<div style="left:1135.5px;top:409px;width:7.807843363751877px;height:1px;background:#444"></div>
<svg style="position:absolute;left:1117px;top:417px;" width="14" height="14" viewBox="0 0 14 14"><circle cx="7" cy="7" r="6" fill="#fff" stroke="#adadad"/></svg>
<div style="left:1135.50px;top:418.62px;font-size:12.5px;line-height:12.5px;color:#333;transform:scaleX(0.9383);transform-origin:left center;">Gradient line</div>
<div style="left:1135.5px;top:431px;width:9.1232465206008px;height:1px;background:#444"></div>
<svg style="position:absolute;left:1117px;top:439px;" width="14" height="14" viewBox="0 0 14 14"><circle cx="7" cy="7" r="6" fill="#fff" stroke="#adadad"/><circle cx="7" cy="7" r="3.2" fill="#6a6a6a"/></svg>
<div style="left:1135.50px;top:440.62px;font-size:12.5px;line-height:12.5px;color:#333;transform:scaleX(0.9896);transform-origin:left center;">Automatic</div>
<div style="left:1143.7514496573538px;top:453px;width:6.879107362502197px;height:1px;background:#444"></div>
<div style="left:1117px;top:462px;width:215px;height:1px;background:#adadad"></div>
<div style="left:1336px;top:317px;width:15px;height:369px;background:#dcdcdc"></div>
<div style="left:1336px;top:317px;width:15px;height:15px;background:#fff;border:1px solid #ababab;box-sizing:border-box"></div>
<svg style="position:absolute;left:1339px;top:321px;" width="9" height="6" viewBox="0 0 9 6"><path d="M0.5 5 L4.5 0.5 L8.5 5z" fill="#444"/></svg>
<div style="left:1336px;top:331px;width:15px;height:243px;background:#fff;border:1px solid #ababab;box-sizing:border-box"></div>
<div style="left:1336px;top:671px;width:15px;height:15px;background:#fff;border:1px solid #ababab;box-sizing:border-box"></div>
<svg style="position:absolute;left:1339px;top:676px;" width="9" height="6" viewBox="0 0 9 6"><path d="M0.5 0.5 L4.5 5 L8.5 0.5z" fill="#444"/></svg>
<div style="left:1127.30px;top:477.72px;font-size:12.5px;line-height:12.5px;color:#333;transform:scaleX(1.1048);transform-origin:left center;">Color</div>
<div style="left:1127.3px;top:490.3px;width:9.973582684888513px;height:1px;background:#444"></div>
<div style="left:1127.30px;top:507.22px;font-size:12.5px;line-height:12.5px;color:#333;transform:scaleX(0.9216);transform-origin:left center;">Transparency</div>
<div style="left:1127.3px;top:519.8px;width:7.0363608311047106px;height:1px;background:#444"></div>
<div style="left:1127.30px;top:534.72px;font-size:12.5px;line-height:12.5px;color:#333;">Width</div>
<div style="left:1127.3px;top:547.3px;width:11.81685922122379px;height:1px;background:#444"></div>
<div style="left:1127.30px;top:564.62px;font-size:12.5px;line-height:12.5px;color:#333;transform:scaleX(0.9859);transform-origin:left center;">Compound type</div>
<div style="left:1127.3px;top:577.2px;width:8.900068612912508px;height:1px;background:#444"></div>
<div style="left:1127.30px;top:596.92px;font-size:12.5px;line-height:12.5px;color:#333;transform:scaleX(0.9418);transform-origin:left center;">Dash type</div>
<div style="left:1127.3px;top:609.5px;width:8.501631151523565px;height:1px;background:#444"></div>
<div style="left:1127.30px;top:627.72px;font-size:12.5px;line-height:12.5px;color:#333;transform:scaleX(0.9495);transform-origin:left center;">Cap type</div>
<div style="left:1135.8712891387522px;top:640.3px;width:6.600003904114937px;height:1px;background:#444"></div>
<div style="left:1127.30px;top:654.92px;font-size:12.5px;line-height:12.5px;color:#333;transform:scaleX(0.9395);transform-origin:left center;">Join type</div>
<div style="left:1127.3px;top:667.5px;width:5.8717888654641985px;height:1px;background:#444"></div>
<div style="left:1288px;top:471px;width:44px;height:26px;background:#fff;border:1px solid #adadad;box-sizing:border-box"></div>
<svg style="position:absolute;left:1297px;top:475px;" width="18" height="18" viewBox="0 0 18 18"><path d="M2 8 L7 3 L12 8 L7 13z" fill="#fff" stroke="#444"/><path d="M6 1 v5" stroke="#444"/><path d="M12 7 q3 1 2 5" stroke="#3f7fc4" stroke-width="2" fill="none"/><rect x="0" y="14" width="16" height="3" fill="#ccc"/></svg>
<svg style="position:absolute;left:1318px;top:482px;" width="8" height="5" viewBox="0 0 8 5"><path d="M0 0 h7 l-3.5 4z" fill="#555"/></svg>
<svg style="position:absolute;left:1207px;top:508px;" width="47" height="9" viewBox="0 0 47 9"><rect x="0" y="0" width="2" height="8" fill="#777"/><rect x="2" y="3.5" width="44" height="1" fill="#aaa"/></svg>
<div style="left:1259px;top:503px;width:73px;height:21px;background:#fff;border:1px solid #adadad;box-sizing:border-box"></div>
<div style="left:1266.00px;top:507.42px;font-size:12.5px;line-height:12.5px;color:#222;">0%</div>
<svg style="position:absolute;left:1320px;top:507px;" width="8" height="14" viewBox="0 0 8 14"><path d="M0.5 4 L3.5 0.5 L6.5 4z M0.5 9 L3.5 12.5 L6.5 9z" fill="#555"/></svg>
<div style="left:1259px;top:530px;width:73px;height:21px;background:#fff;border:1px solid #adadad;box-sizing:border-box"></div>
<div style="left:1266.00px;top:534.42px;font-size:12.5px;line-height:12.5px;color:#222;">0.75 pt</div>
<svg style="position:absolute;left:1320px;top:534px;" width="8" height="14" viewBox="0 0 8 14"><path d="M0.5 4 L3.5 0.5 L6.5 4z M0.5 9 L3.5 12.5 L6.5 9z" fill="#555"/></svg>
<div style="left:1288px;top:557px;width:44px;height:27px;background:#fff;border:1px solid #adadad;box-sizing:border-box"></div>
<svg style="position:absolute;left:1297px;top:564px;" width="16" height="12" viewBox="0 0 16 12"><rect x="0" y="1" width="16" height="2" fill="#2e75b6"/><rect x="3" y="5.5" width="13" height="1.5" fill="#2e75b6"/><rect x="3" y="9" width="13" height="1.5" fill="#2e75b6"/></svg>
<svg style="position:absolute;left:1318px;top:568px;" width="8" height="5" viewBox="0 0 8 5"><path d="M0 0 h7 l-3.5 4z" fill="#555"/></svg>
<div style="left:1288px;top:590px;width:44px;height:27px;background:#fff;border:1px solid #adadad;box-sizing:border-box"></div>
<svg style="position:absolute;left:1297px;top:598px;" width="16" height="12" viewBox="0 0 16 12"><path d="M0 1.5 h16" stroke="#666"/><path d="M0 5.5 h16 M0 8.5 h16" stroke="#666" stroke-dasharray="1 1"/></svg>
<svg style="position:absolute;left:1318px;top:601px;" width="8" height="5" viewBox="0 0 8 5"><path d="M0 0 h7 l-3.5 4z" fill="#555"/></svg>
<div style="left:1264px;top:622px;width:68px;height:22px;background:#fff;border:1px solid #adadad;box-sizing:border-box"></div>
<div style="left:1271.00px;top:627.42px;font-size:12.5px;line-height:12.5px;color:#222;">Flat</div>
<svg style="position:absolute;left:1318px;top:630px;" width="8" height="5" viewBox="0 0 8 5"><path d="M0 0 h7 l-3.5 4z" fill="#555"/></svg>
<div style="left:1265px;top:649px;width:68px;height:22px;background:#fff;border:1px solid #adadad;box-sizing:border-box"></div>
<div style="left:1272.00px;top:654.42px;font-size:12.5px;line-height:12.5px;color:#222;">Round</div>
<svg style="position:absolute;left:1318px;top:657px;" width="8" height="5" viewBox="0 0 8 5"><path d="M0 0 h7 l-3.5 4z" fill="#555"/></svg>
<div style="left:1127.30px;top:683.92px;font-size:12.5px;line-height:12.5px;color:#8a8a8a;transform:scaleX(0.8784);transform-origin:left center;">Begin Arrow type</div>
<div style="left:1288px;top:677px;width:44px;height:11px;background:#f7f7f7;border:1px solid #dadada;border-bottom:none;box-sizing:border-box"></div>
<svg style="position:absolute;left:1296px;top:681px;" width="18" height="6" viewBox="0 0 18 6"><path d="M1 2.5 h14 M12 0.5 l3 2 l-3 2" stroke="#999" fill="none"/></svg>
<div style="left:1082px;top:687.5px;width:284px;height:18.5px;background:#f0f0f0"></div>
<div style="left:1081px;top:191px;width:1px;height:512px;background:#ababab"></div>
<div style="left:0px;top:706px;width:1366px;height:21px;background:#0c6534"></div>
<div style="left:7.40px;top:711.69px;font-size:11px;line-height:11px;color:#fff;transform:scaleX(0.8602);transform-origin:left center;">READY</div>
<div style="left:1074px;top:706px;width:38px;height:21px;background:#0a5129"></div>
<svg style="position:absolute;left:1086px;top:710px;" width="14" height="14" viewBox="0 0 14 14"><g stroke="#fff" stroke-width="1" fill="none"><rect x="0.5" y="0.5" width="12" height="12"/><path d="M0.5 4.5 h12 M0.5 8.5 h12 M4.5 0.5 v12 M8.5 0.5 v12"/></g></svg>
<svg style="position:absolute;left:1124px;top:710px;" width="14" height="14" viewBox="0 0 14 14"><g stroke="#fff" stroke-width="1" fill="none"><rect x="0.5" y="0.5" width="12" height="12"/><rect x="2.5" y="2.5" width="8" height="8"/><path d="M4 4.5 h5 M4 6.5 h5 M4 8.5 h5"/></g></svg>
<svg style="position:absolute;left:1162px;top:710px;" width="14" height="14" viewBox="0 0 14 14"><g stroke="#fff" stroke-width="1" fill="none"><rect x="0.5" y="0.5" width="12" height="12"/></g><rect x="3" y="1" width="2" height="6" fill="#fff"/><rect x="6" y="1" width="2" height="4" fill="#fff"/><rect x="8" y="1" width="1" height="4" fill="#fff" opacity="0.5"/></svg>
<div style="left:1193px;top:716px;width:6px;height:2px;background:#fff"></div>
<div style="left:1203px;top:716px;width:100px;height:1px;background:#fff"></div>
<div style="left:1251px;top:710px;width:5px;height:13px;background:#fff"></div>
<div style="left:1307px;top:716px;width:8px;height:2px;background:#fff"></div>
<div style="left:1310px;top:713px;width:2px;height:8px;background:#fff"></div>
<div style="left:1330.00px;top:711.27px;font-size:11.5px;line-height:11.5px;color:#fff;transform:scaleX(0.9180);transform-origin:left center;">100%</div>
</body></html>
